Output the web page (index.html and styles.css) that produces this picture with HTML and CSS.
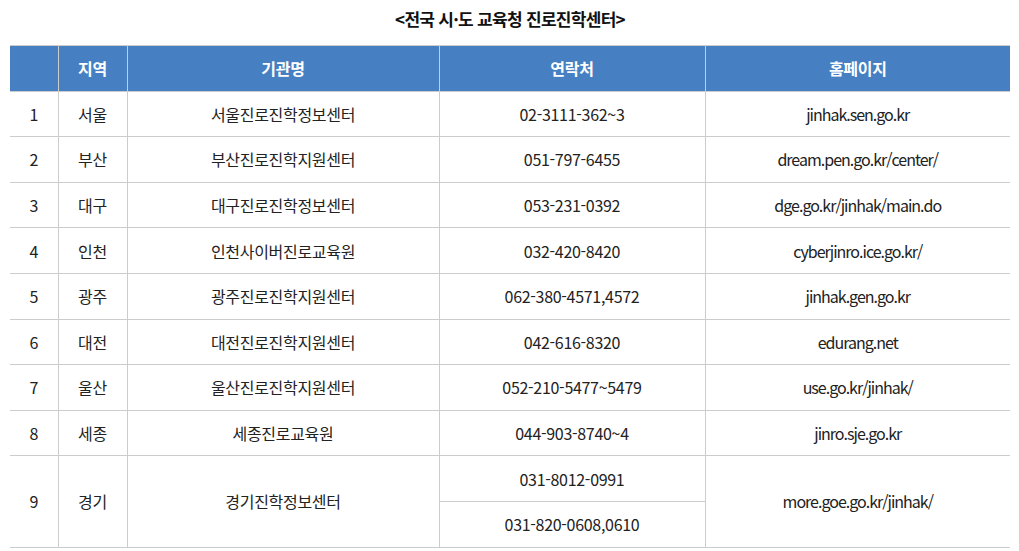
FILE: index.html
```html
<!DOCTYPE html>
<html lang="ko">
<head>
<meta charset="utf-8">
<link rel="stylesheet" href="styles.css">
</head>
<body>
<div class="page">
  <h2 class="title">&lt;전국 시·도 교육청 진로진학센터&gt;</h2>
  <table class="tbl">
    <colgroup>
      <col class="c1"><col class="c2"><col class="c3"><col class="c4"><col class="c5">
    </colgroup>
    <thead>
      <tr><th></th><th>지역</th><th>기관명</th><th>연락처</th><th>홈페이지</th></tr>
    </thead>
    <tbody>
      <tr><td>1</td><td>서울</td><td>서울진로진학정보센터</td><td>02-3111-362~3</td><td class="url">jinhak.sen.go.kr</td></tr>
      <tr><td>2</td><td>부산</td><td>부산진로진학지원센터</td><td>051-797-6455</td><td class="url">dream.pen.go.kr/center/</td></tr>
      <tr><td>3</td><td>대구</td><td>대구진로진학정보센터</td><td>053-231-0392</td><td class="url">dge.go.kr/jinhak/main.do</td></tr>
      <tr><td>4</td><td>인천</td><td>인천사이버진로교육원</td><td>032-420-8420</td><td class="url">cyberjinro.ice.go.kr/</td></tr>
      <tr><td>5</td><td>광주</td><td>광주진로진학지원센터</td><td>062-380-4571,4572</td><td class="url">jinhak.gen.go.kr</td></tr>
      <tr><td>6</td><td>대전</td><td>대전진로진학지원센터</td><td>042-616-8320</td><td class="url">edurang.net</td></tr>
      <tr><td>7</td><td>울산</td><td>울산진로진학지원센터</td><td>052-210-5477~5479</td><td class="url">use.go.kr/jinhak/</td></tr>
      <tr><td>8</td><td>세종</td><td>세종진로교육원</td><td>044-903-8740~4</td><td class="url">jinro.sje.go.kr</td></tr>
      <tr><td rowspan="2">9</td><td rowspan="2">경기</td><td rowspan="2">경기진학정보센터</td><td>031-8012-0991</td><td rowspan="2" class="url">more.goe.go.kr/jinhak/</td></tr>
      <tr><td>031-820-0608,0610</td></tr>
    </tbody>
  </table>
</div>
</body>
</html>
```
FILE: styles.css
```css
html, body {
  margin: 0;
  padding: 0;
  background: #fff;
}
body {
  font-family: "Noto Sans CJK KR", "Noto Sans", sans-serif;
  color: #222;
}
.page {
  padding: 0 9px 0 10px;
}
.title {
  margin: 0;
  height: 45px;
  line-height: 38px;
  text-align: center;
  font-size: 17px;
  font-weight: 700;
  letter-spacing: -0.7px;
  color: #111;
}
.tbl {
  width: 1000px;
  border-collapse: collapse;
  table-layout: fixed;
  font-size: 16px;
  letter-spacing: -0.3px;
}
.c1 { width: 48px; }
.c2 { width: 69px; }
.c3 { width: 312px; }
.c4 { width: 266px; }
.c5 { width: 305px; }
.tbl tr { height: 45.6px; }
.tbl th, .tbl td {
  border: 1px solid #cccccc;
  text-align: center;
  vertical-align: middle;
  padding: 0;
}
.tbl th {
  background: #4680c2;
  color: #fff;
  font-weight: 700;
  font-size: 16px;
}
.tbl td.url { letter-spacing: -1px; }
.tbl td:first-child, .tbl th:first-child { border-left: none; }
.tbl td:last-child, .tbl th:last-child { border-right: none; }
.tbl tbody tr:nth-child(10) td { border-right: 1px solid #cccccc; }
```
